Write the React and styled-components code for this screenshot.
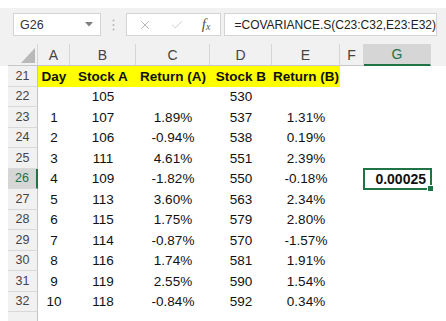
import styled, { createGlobalStyle, css } from "styled-components";
import { X, Check } from "lucide-react";

const GlobalStyle = createGlobalStyle`
  html, body {
    margin: 0;
    background: #ffffff;
    overflow: hidden;
    font-family: "Liberation Sans", Arial, sans-serif;
  }
`;

const COLS = "30px 32px 66px 74px 62px 68px 24px 67px 1fr";
const GREEN = "#217346";

const Sheet = styled.div`
  padding-top: 8px;
  width: 446px;
`;

const TopBand = styled.div`
  background: #f1f1f1;
`;

const FormulaBar = styled.div`
  display: flex;
  align-items: flex-start;
  height: 36px;
  padding: 5px 9px 0 13px;
  box-sizing: border-box;
`;

const Box = styled.div`
  height: 23px;
  box-sizing: border-box;
  background: #ffffff;
  border: 1px solid #d4d4d4;
  display: flex;
  align-items: center;
`;

const NameBox = styled(Box)`
  width: 92px;
  padding: 0 7px 0 6px;
  justify-content: space-between;
  font-size: 12.5px;
  color: #333333;
`;

const Separator = styled.div`
  width: 26px;
  height: 23px;
  display: flex;
  align-items: center;
  justify-content: center;
`;

const ButtonsBox = styled(Box)`
  width: 99px;
  padding: 0 10px 0 11px;
  justify-content: space-between;
  color: #a6a6a6;
`;

const Fx = styled.span`
  font-family: "Liberation Serif", serif;
  font-style: italic;
  font-size: 15px;
  color: #555555;
  sub {
    font-size: 10px;
    vertical-align: -1px;
  }
`;

const FormulaInput = styled(Box)`
  flex: 1;
  margin-left: 3px;
  padding-left: 9px;
  font-size: 12px;
  color: #222222;
`;

const Row = styled.div`
  display: grid;
  grid-template-columns: ${COLS};
  margin-left: 8px;
  height: ${(p) => p.$h};
`;

const ColHead = styled.div`
  display: flex;
  align-items: center;
  justify-content: center;
  font-size: 14px;
  color: #444444;
  border-right: 1px solid #d6d6d6;
  border-bottom: 1px solid #c8c8c8;
  box-sizing: border-box;
  ${(p) =>
    p.$selected &&
    css`
      background: #d6d6d6;
      color: ${GREEN};
      border-bottom: 2px solid ${GREEN};
    `}
`;

const Corner = styled(ColHead)`
  align-items: flex-end;
  justify-content: flex-end;
  padding: 0 2px 2px 0;
`;

const RowHead = styled.div`
  display: flex;
  align-items: center;
  justify-content: center;
  font-size: 12.5px;
  color: #444444;
  background: #f1f1f1;
  border-bottom: 1px solid #d9d9d9;
  border-right: 1px solid #c3c3c3;
  box-sizing: border-box;
  ${(p) =>
    p.$selected &&
    css`
      background: #d6d6d6;
      color: ${GREEN};
      border-right: 2px solid ${GREEN};
    `}
`;

const Cell = styled.div`
  position: relative;
  display: flex;
  align-items: center;
  justify-content: ${(p) => (p.$right ? "flex-end" : "center")};
  padding-right: ${(p) => (p.$right ? "5px" : "0")};
  font-size: ${(p) => (p.$bold ? "13.5px" : "13.5px")};
  font-weight: ${(p) => (p.$bold ? 700 : 400)};
  color: #111111;
  white-space: nowrap;
  background: ${(p) => (p.$yellow ? "#ffff00" : "transparent")};
  box-sizing: border-box;
  ${(p) =>
    p.$active &&
    css`
      outline: 2px solid ${GREEN};
      outline-offset: -1px;
      font-size: 14px;
    `}
`;

const FillHandle = styled.span`
  position: absolute;
  right: -3px;
  bottom: -3px;
  width: 5px;
  height: 5px;
  background: ${GREEN};
  border: 1px solid #ffffff;
`;

const columns = ["A", "B", "C", "D", "E", "F", "G"];
const headers = ["Day", "Stock A", "Return (A)", "Stock B", "Return (B)"];
const data = [
  [22, "", "105", "", "530", ""],
  [23, "1", "107", "1.89%", "537", "1.31%"],
  [24, "2", "106", "-0.94%", "538", "0.19%"],
  [25, "3", "111", "4.61%", "551", "2.39%"],
  [26, "4", "109", "-1.82%", "550", "-0.18%"],
  [27, "5", "113", "3.60%", "563", "2.34%"],
  [28, "6", "115", "1.75%", "579", "2.80%"],
  [29, "7", "114", "-0.87%", "570", "-1.57%"],
  [30, "8", "116", "1.74%", "581", "1.91%"],
  [31, "9", "119", "2.55%", "590", "1.54%"],
  [32, "10", "118", "-0.84%", "592", "0.34%"],
];

export default function App() {
  return (
    <>
      <GlobalStyle />
      <Sheet>
        <TopBand>
          <FormulaBar>
            <NameBox>
              <span>G26</span>
              <svg width="8" height="5" viewBox="0 0 8 5">
                <polygon points="0,0 8,0 4,4.5" fill="#808080" />
              </svg>
            </NameBox>
            <Separator>
              <svg width="3" height="12" viewBox="0 0 3 12">
                <circle cx="1.5" cy="1.5" r="1" fill="#b5b5b5" />
                <circle cx="1.5" cy="6" r="1" fill="#b5b5b5" />
                <circle cx="1.5" cy="10.5" r="1" fill="#b5b5b5" />
              </svg>
            </Separator>
            <ButtonsBox>
              <X size={14} strokeWidth={1.4} />
              <Check size={14} strokeWidth={1.4} color="#c4c4c4" />
              <Fx>
                f<sub>x</sub>
              </Fx>
            </ButtonsBox>
            <FormulaInput>=COVARIANCE.S(C23:C32,E23:E32)</FormulaInput>
          </FormulaBar>
          <Row $h="22px">
            <Corner>
              <svg width="14" height="15" viewBox="0 0 14 15">
                <polygon points="0,15 14,15 14,0" fill="#b9b9b9" />
              </svg>
            </Corner>
            {columns.map((c) => (
              <ColHead key={c} $selected={c === "G"}>
                {c}
              </ColHead>
            ))}
          </Row>
        </TopBand>

        <Row $h="20.5px">
          <RowHead>21</RowHead>
          {headers.map((h) => (
            <Cell key={h} $bold $yellow>
              {h}
            </Cell>
          ))}
        </Row>
        {data.map(([n, ...vals]) => (
          <Row key={n} $h="20.5px">
            <RowHead $selected={n === 26}>{n}</RowHead>
            {vals.map((v, i) => (
              <Cell key={i}>{v}</Cell>
            ))}
            <Cell />
            {n === 26 ? (
              <Cell $active $bold $right>
                0.00025
                <FillHandle />
              </Cell>
            ) : (
              <Cell />
            )}
          </Row>
        ))}
        <Row $h="20.5px">
          <RowHead />
        </Row>
      </Sheet>
    </>
  );
}
